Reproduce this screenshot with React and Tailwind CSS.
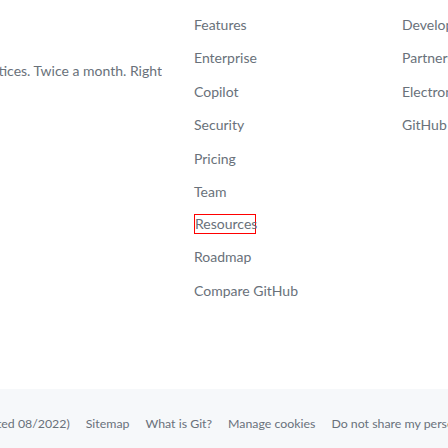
import React from 'react';

const productLinks = ['Features', 'Enterprise', 'Copilot', 'Security', 'Pricing', 'Team', 'Resources', 'Roadmap', 'Compare GitHub'];
const platformLinks = ['Developer API', 'Partners', 'Electron', 'GitHub Desktop'];
const legalLinks = ['Privacy Statement (updated 08/2022)', 'Sitemap', 'What is Git?', 'Manage cookies', 'Do not share my personal information'];

const App = () => {
  return (
    <div className="w-[448px] h-[448px] overflow-hidden bg-white text-[#69717a]" style={{ fontFamily: 'Lato, "Open Sans", sans-serif' }}>
      <div className="flex h-[389px] pt-[13.5px]">
        {/* Newsletter blurb, cut off at the left */}
        <div className="w-[162px] shrink-0 flex justify-end overflow-hidden pt-[46px]">
          <p className="whitespace-nowrap text-[14px] leading-[21px]">Get tips, technical guides, and best practices. Twice a month. Right</p>
        </div>
        <div className="w-[32px] shrink-0" />

        {/* Product */}
        <ul className="w-[208px] shrink-0 flex flex-col gap-[12.5px] text-[14px] leading-[21px]">
          {productLinks.map((link) => (
            <li key={link}>
              {link === 'Resources' ? (
                <a className="block w-[62px] h-[20px] -mt-[1px] border border-[#ff0000] leading-[17px] whitespace-nowrap">{link}</a>
              ) : (
                <a>{link}</a>
              )}
            </li>
          ))}
        </ul>

        {/* Platform */}
        <ul className="flex flex-col gap-[12.5px] text-[14px] leading-[21px] whitespace-nowrap">
          {platformLinks.map((link) => (
            <li key={link}><a>{link}</a></li>
          ))}
        </ul>
      </div>

      {/* Footer strip */}
      <div className="h-[59px] bg-[#f6f8fa] pt-[26px]">
        <ul className="flex gap-[16px] text-[12.35px] leading-[18px] whitespace-nowrap -ml-[134px]">
          {legalLinks.map((link) => (
            <li key={link}><a>{link}</a></li>
          ))}
        </ul>
      </div>
    </div>
  );
};

export default App;
